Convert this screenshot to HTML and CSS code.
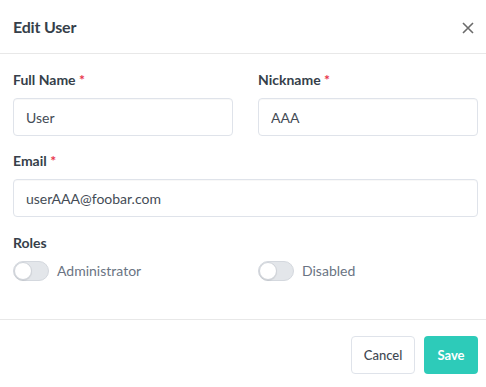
FILE: index.html
```html
<!DOCTYPE html>
<html>
<head>
<meta charset="utf-8">
<link rel="stylesheet" href="styles.css">
</head>
<body>
<div class="modal">
  <header class="modal-head">
    <h1 class="title">Edit User</h1>
    <button class="close" aria-label="close">
      <svg width="12" height="12" viewBox="0 0 12 12"><path d="M1 1L11 11M11 1L1 11" stroke="#6b6b6b" stroke-width="1.6" fill="none"/></svg>
    </button>
  </header>
  <section class="modal-body">
    <div class="row">
      <div class="field">
        <label class="label">Full Name <span class="req">*</span></label>
        <input class="input" value="User">
      </div>
      <div class="field">
        <label class="label">Nickname <span class="req">*</span></label>
        <input class="input" value="AAA">
      </div>
    </div>
    <div class="field">
      <label class="label">Email <span class="req">*</span></label>
      <input class="input" value="userAAA@foobar.com">
    </div>
    <div class="field roles">
      <label class="label">Roles</label>
      <div class="row toggles">
        <div class="toggle"><span class="switch"><span class="knob"></span></span><span class="tlabel">Administrator</span></div>
        <div class="toggle"><span class="switch"><span class="knob"></span></span><span class="tlabel">Disabled</span></div>
      </div>
    </div>
  </section>
  <footer class="modal-foot">
    <button class="btn btn-cancel">Cancel</button>
    <button class="btn btn-save">Save</button>
  </footer>
</div>
</body>
</html>
```
FILE: styles.css
```css
* { box-sizing: border-box; }
html, body { margin: 0; padding: 0; background: #fff; }
body { font-family: "Lato", "Open Sans", sans-serif; color: #4a4a4a; }
.modal { width: 486px; height: 387px; background: #fff; display: flex; flex-direction: column; }
.modal-head {
  height: 54px; border-bottom: 1px solid #e8e8e8;
  display: flex; align-items: center; justify-content: space-between;
  padding: 0 12px 0 13px;
}
.title { margin: 0; font-size: 16px; font-weight: 700; color: #363f4a; letter-spacing: -0.2px; }
.close { border: 0; background: none; padding: 0; width: 12px; height: 12px; display: flex; margin-top: 2px; }
.modal-body { padding: 16px 8px 0 13px; height: 266px; border-bottom: 1px solid #e8e8e8; }
.row { display: flex; gap: 25px; }
.row > .field { flex: 1; }
.field { display: flex; flex-direction: column; margin-bottom: 15px; }
.label { font-size: 14px; font-weight: 700; color: #363f4a; line-height: 20px; margin-bottom: 8px; }
.req { color: #e8334a; }
.input {
  height: 38px; border: 1px solid #dfe3ea; border-radius: 4px;
  padding: 0 12px; font-family: inherit; font-size: 14px; color: #444c56;
  box-shadow: inset 0 1px 1px rgba(10,10,10,0.03); outline: none;
}
.roles .label { margin-bottom: 8px; margin-top: 1px; }
.toggles { gap: 0; }
.toggle { flex: 1; display: flex; align-items: center; gap: 8px; }
.toggle + .toggle { padding-left: 25px; }
.switch {
  width: 36px; height: 20px; border-radius: 10px; background: #e3e6ea;
  border: 1px solid #d4d8de; position: relative; display: inline-block;
}
.knob {
  position: absolute; left: 0; top: 0; width: 18px; height: 18px; border-radius: 50%;
  background: #fff; border: 1px solid #cfd3d9; box-shadow: 0 1px 1px rgba(0,0,0,0.08);
}
.tlabel { font-size: 14px; color: #6a7483; line-height: 20px; }
.modal-foot { display: flex; justify-content: flex-end; gap: 9px; padding: 16px 8px 0 13px; }
.btn {
  height: 38px; border-radius: 4px; font-family: inherit; font-size: 13px; padding: 0 10px;
}
.btn-cancel { width: 64px; border: 1px solid #dfe3ea; background: #fff; color: #3f4852; font-weight: 500; }
.btn-save { width: 54px; border: 0; background: #2dcbb9; color: #fff; font-weight: 700; }
```
